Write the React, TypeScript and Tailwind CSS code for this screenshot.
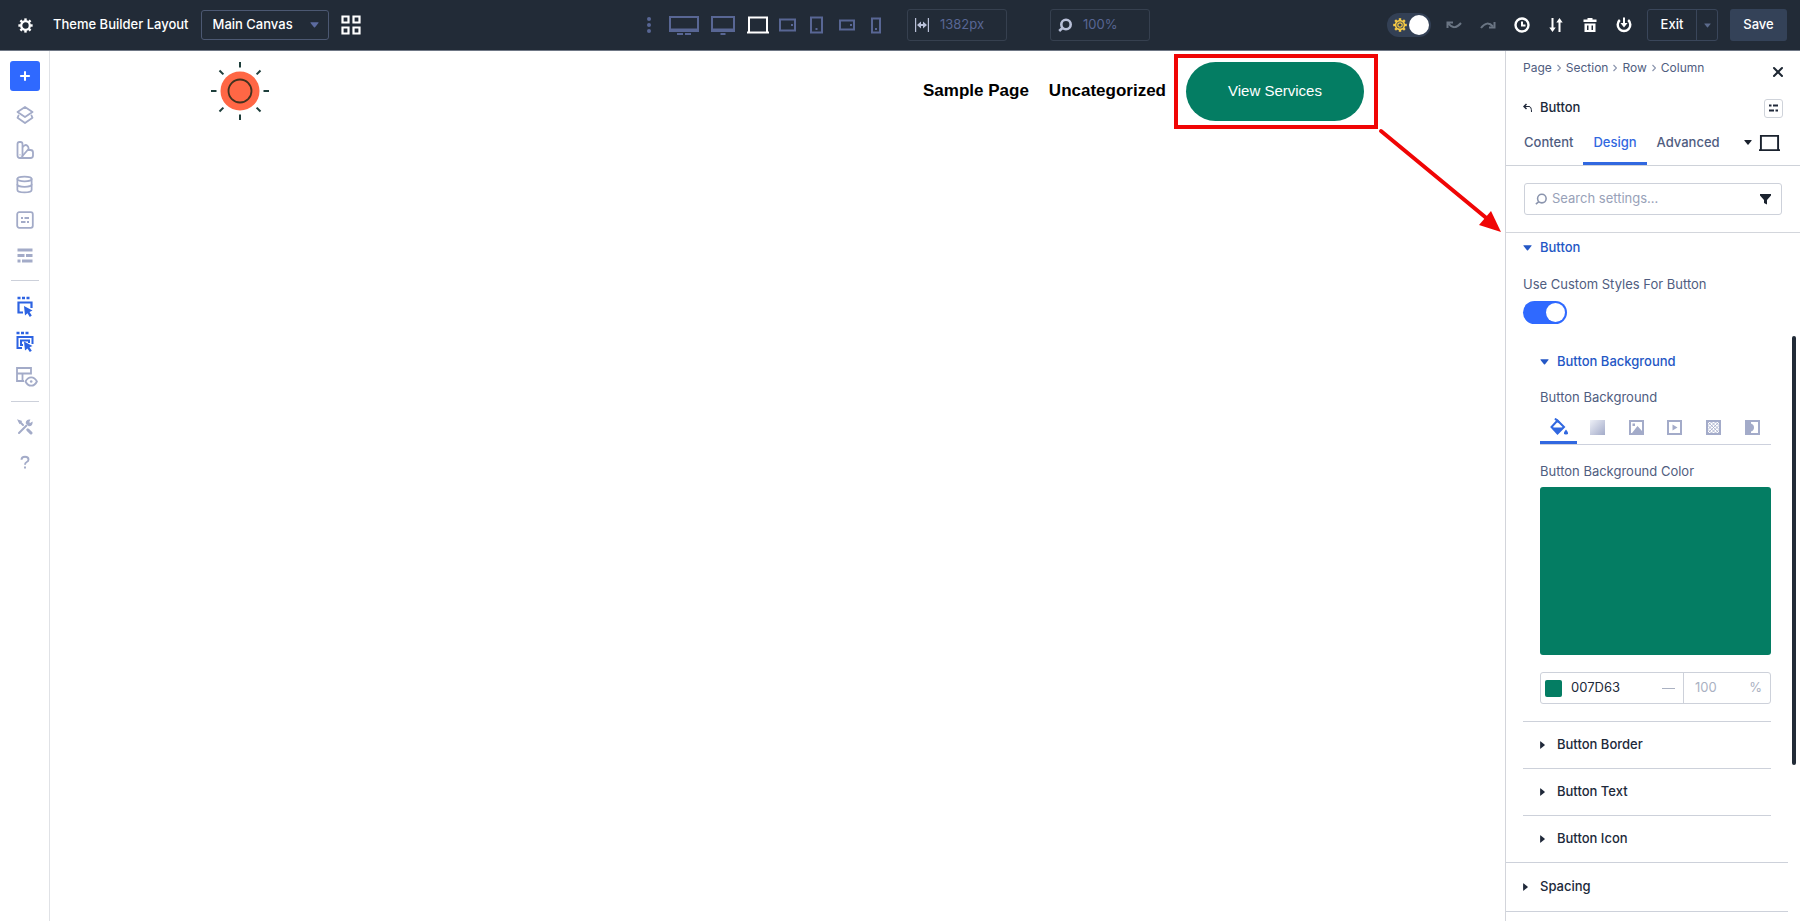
import React, { useState } from "react";
import { Database, Plus, X } from "lucide-react";

type IconProps = { className?: string };

const GearIcon = ({ className }: IconProps) => (
  <svg className={className} viewBox="0 0 16 16" fill="none" stroke="currentColor">
    <circle cx="8" cy="8" r="4.6" strokeWidth="2.4" />
    {[0, 45, 90, 135, 180, 225, 270, 315].map((a) => (
      <path key={a} d="M8 0.4V3" strokeWidth="2.6" transform={`rotate(${a} 8 8)`} />
    ))}
  </svg>
);

const SunIcon = ({ className }: IconProps) => (
  <svg className={className} viewBox="0 0 14 14" fill="none" stroke="currentColor">
    <circle cx="7" cy="7" r="4.4" strokeWidth="1.6" />
    <circle cx="7" cy="7" r="2.2" strokeWidth="1.2" />
    {[0, 45, 90, 135, 180, 225, 270, 315].map((a) => (
      <path key={a} d="M7 0.2V2.4" strokeWidth="2.4" transform={`rotate(${a} 7 7)`} />
    ))}
  </svg>
);

const CaretDown = ({ className }: IconProps) => (
  <svg className={className} viewBox="0 0 10 6" fill="currentColor">
    <path d="M1 0h8q1 0 .4.8L5.6 5.5q-.6.7-1.2 0L.6.8Q0 0 1 0z" />
  </svg>
);

const CaretRight = ({ className }: IconProps) => (
  <svg className={className} viewBox="0 0 6 10" fill="currentColor">
    <path d="M0 1v8q0 1 .8.4L5.5 5.6q.7-.6 0-1.2L.8.6Q0 0 0 1z" />
  </svg>
);

// magnifier with the handle on the lower left
const SearchIcon = ({ className }: IconProps) => (
  <svg className={className} viewBox="0 0 14 14" fill="none" stroke="currentColor" strokeWidth="2.6">
    <circle cx="8" cy="6.5" r="4.7" />
    <path d="M5 9.5L1.2 13" />
  </svg>
);

const LaptopIcon = ({ className }: IconProps) => (
  <svg className={className} viewBox="0 0 22 18" fill="none" stroke="currentColor" strokeWidth="2">
    <path d="M2 16V1.5h18V16M0 16.5h22" />
  </svg>
);

const DEVICES = [
  {
    label: "Ultra wide",
    box: "w-[30px] mr-3",
    icon: (
      <svg className="w-[30px] h-5" viewBox="0 0 30 20" fill="none" stroke="currentColor" strokeWidth="2">
        <path d="M1 2h28v14H1zM1 14.5h28M8 19h6M16 19h6" />
      </svg>
    ),
  },
  {
    label: "Wide",
    box: "w-6 mr-3",
    icon: (
      <svg className="w-6 h-5" viewBox="0 0 24 20" fill="none" stroke="currentColor" strokeWidth="2">
        <path d="M1 2h22v14H1zM1 14.5h22M9.5 19h5" />
      </svg>
    ),
  },
  { label: "Desktop", box: "w-[22px] mr-2.5 text-white", icon: <LaptopIcon className="w-[22px] h-[18px]" /> },
  {
    label: "Tablet wide",
    box: "w-[17px] mr-3.5",
    icon: (
      <svg className="w-[17px] h-3.5" viewBox="0 0 17 14" fill="none" stroke="currentColor" strokeWidth="2">
        <path d="M1 1.5h15v11H1zM12 7h2" />
      </svg>
    ),
  },
  {
    label: "Tablet",
    box: "w-[13px] mr-4",
    icon: (
      <svg className="w-[13px] h-[18px]" viewBox="0 0 13 18" fill="none" stroke="currentColor" strokeWidth="2">
        <path d="M1 1.5h11v15H1zM6.5 12v2" />
      </svg>
    ),
  },
  {
    label: "Phone wide",
    box: "w-4 mr-4",
    icon: (
      <svg className="w-4 h-3" viewBox="0 0 16 12" fill="none" stroke="currentColor" strokeWidth="2">
        <path d="M1 1.5h14v9H1zM11 6h2" />
      </svg>
    ),
  },
  {
    label: "Phone",
    box: "w-2.5 mr-[26px]",
    icon: (
      <svg className="w-2.5 h-[17px]" viewBox="0 0 10 17" fill="none" stroke="currentColor" strokeWidth="2">
        <path d="M1 1.5h8v14H1zM5 11v2" />
      </svg>
    ),
  },
];

const ACTIONS = [
  {
    label: "Undo",
    className: "text-[#6a7583]",
    icon: (
      <svg className="size-4" viewBox="0 0 16 16" fill="none" stroke="currentColor" strokeWidth="2">
        <path d="M1.5 11V5.5H7M2.5 6.5Q8 14 15 6" />
      </svg>
    ),
  },
  {
    label: "Redo",
    className: "text-[#6a7583]",
    icon: (
      <svg className="size-4" viewBox="0 0 16 16" fill="none" stroke="currentColor" strokeWidth="2">
        <path d="M1 11Q7 3 13 9.5" />
        <path d="M14.5 5v5.5H9" />
      </svg>
    ),
  },
  {
    label: "History",
    className: "text-white",
    icon: (
      <svg className="size-4" viewBox="0 0 16 16" fill="none" stroke="currentColor" strokeWidth="2">
        <circle cx="8" cy="8" r="6.5" strokeWidth="2.4" />
        <path d="M8 4.5v4h3.5" />
      </svg>
    ),
  },
  {
    label: "Portability",
    className: "text-white",
    icon: (
      <svg className="size-4" viewBox="0 0 16 16" fill="currentColor">
        <path d="M3.5 1h2v9.5h2.2L4.5 15 1.3 10.5h2.200zM10.500 15h2V5.5h2.200L11.500 1 8.300 5.500h2.200z" />
      </svg>
    ),
  },
  {
    label: "Clear",
    className: "text-white",
    icon: (
      <svg className="size-4" viewBox="0 0 16 16" fill="currentColor">
        <path d="M1.500 2.500H5.500V1h5v1.500h4V5h-13z" />
        <path fillRule="evenodd" d="M2.500 6.500h11V15h-11zM5 8.500V13h1.500V8.500zM9.500 8.500V13H11V8.500z" />
      </svg>
    ),
  },
  {
    label: "Page settings",
    className: "text-white",
    icon: (
      <svg className="size-4" viewBox="0 0 16 16" fill="none" stroke="currentColor" strokeWidth="2">
        <path d="M3.800 3a6.300 6.300 0 1 0 8.400 0" strokeWidth="2.400" />
        <path d="M8 .5v7" />
        <path d="M4.500 6h7L8 10.500z" fill="currentColor" stroke="none" />
      </svg>
    ),
  },
];

const LayersIcon = (
  <svg className="size-[18px]" viewBox="0 0 18 18" fill="none" stroke="currentColor" strokeWidth="1.8" strokeLinejoin="round" strokeLinecap="round">
    <path d="M9 1l7.500 5L9 11 1.500 6z" />
    <path d="M2.500 9.500L1.500 11.800 9 17l7.500-5.200-1-2.300" />
  </svg>
);

const SwatchIcon = (
  <svg className="size-[18px]" viewBox="0 0 18 18" fill="none" stroke="currentColor" strokeWidth="1.8" strokeLinejoin="round">
    <path d="M1.500 3q0-2 2-2h1q2 0 2 2v11.500q0 2.500-2.500 2.500T1.500 14.500z" />
    <path d="M6.500 6l2-1.600q1.500-1 2.700.3l1 1.200q1 1.400-.1 2.600L6 15.500" />
    <path d="M12 9h2.500q2.500 0 2.500 2.500v3q0 2.500-2.500 2.500H4" />
    <path d="M4 13.500v.8" strokeWidth="1.5" />
  </svg>
);

const PresetIcon = (
  <svg className="size-[18px]" viewBox="0 0 18 18" fill="none" stroke="currentColor" strokeWidth="1.8">
    <rect x="1.2" y="1.2" width="15.6" height="15.6" rx="2" />
    <path d="M5 7h2M8.500 7h4.500M5 11h4.500M11 11h2" />
  </svg>
);

const WireframeIcon = (
  <svg className="size-[18px]" viewBox="0 0 18 18" fill="none" stroke="currentColor" strokeWidth="3">
    <path d="M1.500 4h15M1.500 9.500h7M10 9.500h6.500M1.500 15h3M6 15h10.500" />
  </svg>
);

const SelectIcon = (
  <svg className="w-[18px] h-[22px]" viewBox="0 0 18 22" fill="none" stroke="currentColor" strokeWidth="2.2">
    <path d="M1.500 2h3M6 2h3M10.500 2h3" strokeWidth="2.4" />
    <path d="M7 16.500H2.500V6.500H15.500V12" />
    <path d="M8 10l8.500 4.500-3 1.500 2.300 3.600-2 1.300-2.300-3.600L9 19.500z" fill="currentColor" stroke="none" />
  </svg>
);

const MultiSelectIcon = (
  <svg className="w-[18px] h-[22px]" viewBox="0 0 18 22" fill="none" stroke="currentColor" strokeWidth="2">
    <path d="M.5 2h3M5 2h3M9.500 2h3" strokeWidth="2.4" />
    <path d="M6 17H1.500V6H16.500V13" />
    <path d="M7 14H5V9.500H13V12" />
    <path d="M8 10.500l8.500 4.500-3 1.200 2.300 3.600-2 1.300-2.300-3.600L9 19.500z" fill="currentColor" stroke="none" />
  </svg>
);

const LayoutEyeIcon = (
  <svg className="w-[22px] h-5" viewBox="0 0 22 20" fill="none" stroke="currentColor" strokeWidth="1.8">
    <path d="M8 14H1V1h14v6.500M1 6.500h14M6.500 6.500V14" />
    <path d="M9.500 14.500q2-4.200 5.700-4.200t5.700 4.200q-2 4.200-5.700 4.200t-5.700-4.200z" />
    <circle cx="15.200" cy="14.500" r="1.300" fill="currentColor" stroke="none" />
  </svg>
);

const ToolsIcon = (
  <svg className="size-4" viewBox="0 0 16 16" fill="none" stroke="currentColor" strokeWidth="2" strokeLinecap="round">
    <path d="M2 14l7.500-7.500M6 6L2.500 2.500M10.500 10.500l3 3" />
    <path d="M12.500 1q-3 0-3.200 3l2.700 2.700q3-.2 3-3.200l-2 1.200-1.500-1.500z" strokeWidth="1.2" fill="currentColor" />
    <path d="M1.200 1.200l3 1-1.500 2z" strokeWidth="1.2" />
    <path d="M11 11l3 3" strokeWidth="3" />
  </svg>
);

const FILLS = [
  {
    label: "Color",
    icon: (
      <svg className="size-[18px]" viewBox="0 0 18 18" fill="none" stroke="currentColor" strokeWidth="2">
        <path d="M5 .5l4 4" />
        <path d="M7.500 2.500L14 9l-6.500 6.500L1.500 9z" />
        <path d="M2 9.500h12L7.500 16z" fill="currentColor" stroke="none" />
        <path d="M16 11.500q2 2.500 2 3.700t-2 1.300-2-1.300 2-3.700z" fill="currentColor" stroke="none" />
      </svg>
    ),
  },
  {
    label: "Gradient",
    icon: (
      <svg className="size-[15px]" viewBox="0 0 15 15">
        <defs>
          <linearGradient id="fill-gradient" x1="0" y1="0" x2="1" y2="1">
            <stop offset="0" stopColor="#eef0f7" />
            <stop offset="1" stopColor="#a3abc9" />
          </linearGradient>
        </defs>
        <rect width="15" height="15" fill="url(#fill-gradient)" />
      </svg>
    ),
  },
  {
    label: "Image",
    icon: (
      <svg className="size-[15px]" viewBox="0 0 15 15" fill="none" stroke="currentColor" strokeWidth="2">
        <path d="M1 1h13v13H1z" />
        <path d="M3 13l5.500-7L13 11v2zM3.500 3.500H6V6H3.500z" fill="currentColor" stroke="none" />
      </svg>
    ),
  },
  {
    label: "Video",
    icon: (
      <svg className="size-[15px]" viewBox="0 0 15 15" fill="none" stroke="currentColor" strokeWidth="2">
        <path d="M1 1h13v13H1z" />
        <path d="M5.500 4.500v6l5-3z" fill="currentColor" stroke="none" />
      </svg>
    ),
  },
  {
    label: "Pattern",
    icon: (
      <svg className="size-[15px]" viewBox="0 0 15 15" fill="none" stroke="currentColor">
        <path d="M1 1h13v13H1z" strokeWidth="2" />
        <path d="M2 5.500L5.500 2M2 9.500L9.500 2M2 13L13 2M5.500 13L13 5.500M9.500 13L13 9.500M9.500 2L13 5.500M5.500 2L13 9.500M2 2l11 11M2 5.500L9.500 13M2 9.500L5.500 13" strokeWidth="0.8" />
      </svg>
    ),
  },
  {
    label: "Mask",
    icon: (
      <svg className="size-[15px]" viewBox="0 0 15 15" fill="none" stroke="currentColor" strokeWidth="2">
        <path d="M1 1h13v13H1z" />
        <path d="M1 1h5v2.500q3 1 3 4t-3 4V14H1z" fill="currentColor" stroke="none" />
      </svg>
    ),
  },
];

function TopBar() {
  return (
    <header className="grid grid-cols-[1fr_auto_1fr] items-center h-[51px] shrink-0 bg-[#222b37] border-b border-[#6f7785] pl-[18px] pr-[13px] text-white text-[13px] font-medium">
      <div className="flex items-center">
        <button aria-label="Settings">
          <GearIcon className="size-[15px]" />
        </button>
        <h1 className="ml-5 whitespace-nowrap">Theme Builder Layout</h1>
        <div className="relative ml-3">
          <select aria-label="Canvas" className="appearance-none w-32 h-[30px] pl-[11px] rounded-[3px] border border-[#4c5872] bg-transparent">
            <option>Main Canvas</option>
          </select>
          <CaretDown className="absolute right-2.5 top-3 w-[9px] h-[6px] text-[#5c6ba0] pointer-events-none" />
        </div>
        <button aria-label="Canvas grid" className="ml-3">
          <svg className="size-5" viewBox="0 0 20 20" fill="none" stroke="currentColor" strokeWidth="2.2">
            <path d="M1.500 1.500h6v6h-6zM12.500 1.500h6v6h-6zM1.500 12.500h6v6h-6zM12.500 12.500h6v6h-6z" />
          </svg>
        </button>
      </div>

      <div className="flex items-center pr-2 text-[#586694]">
        <button aria-label="More" className="mr-[18px]">
          <svg className="w-1 h-4" viewBox="0 0 4 16" fill="currentColor">
            <circle cx="2" cy="2" r="2" />
            <circle cx="2" cy="8" r="2" />
            <circle cx="2" cy="14" r="2" />
          </svg>
        </button>
        {DEVICES.map((d) => (
          <button key={d.label} aria-label={d.label} className={`shrink-0 ${d.box}`}>
            {d.icon}
          </button>
        ))}
        <label className="flex items-center w-[100px] h-8 mr-[43px] pl-[7px] rounded-[3px] border border-[#36404f]">
          <svg className="w-3.5 h-4 mr-[11px] shrink-0 text-[#b9c0d8]" viewBox="0 0 14 16" fill="none" stroke="currentColor" strokeWidth="1.2">
            <path d="M.6 1v14M13.400 1v14" />
            <path d="M4 8h6" strokeWidth="2" />
            <path d="M2 8l4-3.500v7zM12 8L8 4.500v7z" fill="currentColor" stroke="none" />
          </svg>
          <input aria-label="Canvas width" defaultValue="1382px" className="w-14 bg-transparent font-normal outline-none" />
        </label>
        <label className="flex items-center w-[100px] h-8 pl-[7px] rounded-[3px] border border-[#36404f]">
          <SearchIcon className="size-3.5 mr-[11px] shrink-0 text-[#b9c0d8]" />
          <input aria-label="Zoom" defaultValue="100%" className="w-14 bg-transparent font-normal outline-none" />
        </label>
      </div>

      <div className="flex items-center justify-end">
        <label className="relative flex mr-[15px]">
          <input
            type="checkbox"
            defaultChecked
            aria-label="Light mode"
            className="appearance-none w-11 h-6 rounded-full bg-[#334055] before:block before:size-5 before:rounded-full before:bg-white before:mt-0.5 before:ml-[22px]"
          />
          <SunIcon className="absolute left-1.5 top-[5px] size-3.5 text-[#f5c945]" />
        </label>
        <div className="flex gap-[18px] mr-[15px]">
          {ACTIONS.map((a) => (
            <button key={a.label} aria-label={a.label} className={a.className}>
              {a.icon}
            </button>
          ))}
        </div>
        <div className="flex h-8 mr-3 rounded-[3px] border border-[#3a465a]">
          <button className="w-12">Exit</button>
          <button aria-label="Exit options" className="flex items-center justify-center w-[21px] border-l border-[#3a465a]">
            <CaretDown className="w-[7px] h-[5px] text-[#5c6b8c]" />
          </button>
        </div>
        <button className="w-[57px] h-8 rounded-[3px] bg-[#344258]">Save</button>
      </div>
    </header>
  );
}

function SideButton({ label, className, children }: { label: string; className?: string; children: React.ReactNode }) {
  return (
    <button aria-label={label} className={`flex items-center justify-center w-8 h-[35px] ${className || "text-[#a3abc8]"}`}>
      {children}
    </button>
  );
}

function Sidebar() {
  return (
    <aside className="flex flex-col items-center w-[50px] shrink-0 border-r border-[#e0e2e6] pt-2.5">
      <button aria-label="Add" className="flex items-center justify-center size-[30px] mb-1.5 rounded-[3px] bg-[#2f69ff] text-white">
        <Plus className="size-3.5" strokeWidth={3.5} />
      </button>
      <SideButton label="Layers">{LayersIcon}</SideButton>
      <SideButton label="Design variables">{SwatchIcon}</SideButton>
      <SideButton label="Data">
        <Database className="size-[19px]" strokeWidth={2.2} />
      </SideButton>
      <SideButton label="Presets">{PresetIcon}</SideButton>
      <SideButton label="Wireframe">{WireframeIcon}</SideButton>
      <hr className="w-7 my-2 border-[#ccd0da]" />
      <SideButton label="Select" className="text-[#2d63e2]">{SelectIcon}</SideButton>
      <SideButton label="Multi select" className="text-[#2d63e2]">{MultiSelectIcon}</SideButton>
      <SideButton label="Layout view">
        <span className="ml-1">{LayoutEyeIcon}</span>
      </SideButton>
      <hr className="w-7 my-[7px] border-[#ccd0da]" />
      <SideButton label="Tools">{ToolsIcon}</SideButton>
      <SideButton label="Help">
        <svg className="w-3 h-3.5" viewBox="0 0 12 16" fill="none" stroke="currentColor" strokeWidth="2.2">
          <path d="M2 5.500Q2 2 6 2t4 3.200Q10 7 8 8T6 11" />
          <path d="M6 13v2.500" />
        </svg>
      </SideButton>
    </aside>
  );
}

function Canvas() {
  return (
    <main className="flex-1 min-w-0">
      <div className="flex items-center justify-between pl-40 pr-[141px] pt-2.5 font-['Liberation_Sans',Arial,sans-serif]">
        <svg className="size-[60px]" viewBox="0 0 60 60" fill="none" stroke="#1e3f3c" role="img" aria-label="Site logo">
          <circle cx="30" cy="30" r="19.5" fill="#ff6745" stroke="none" />
          <circle cx="30" cy="30" r="11.5" strokeWidth="1.8" stroke="#43321f" />
          {[0, 45, 90, 135, 180, 225, 270, 315].map((a) => (
            <path key={a} d="M30 1v5.500" strokeWidth="2" transform={`rotate(${a} 30 30)`} />
          ))}
        </svg>
        <nav className="flex items-center text-[17px] font-bold text-black">
          <a href="#" className="mr-5">Sample Page</a>
          <a href="#" className="mr-5">Uncategorized</a>
          <div className="relative">
            <a href="#" className="flex items-center justify-center w-[178px] h-[59px] rounded-[30px] bg-[#047d63] text-white text-[15px] font-normal">
              View Services
            </a>
            <div className="absolute -left-3 -right-3.5 -top-2 -bottom-2 border-4 border-[#f00505] pointer-events-none" />
            <svg className="absolute left-[192px] top-[66px] w-[126px] h-[106px] max-w-none pointer-events-none" viewBox="0 0 126 106">
              <path d="M3 3L112 93" stroke="#f00505" strokeWidth="4" strokeLinecap="round" />
              <path d="M123 104L113 83 101 97z" fill="#f00505" />
            </svg>
          </div>
        </nav>
      </div>
    </main>
  );
}

const CRUMBS = ["Page", "Section", "Row", "Column"];
const TABS = ["Content", "Design", "Advanced"];

function SettingsPanel() {
  const [tab, setTab] = useState("Design");
  const [fill, setFill] = useState("Color");

  return (
    <aside className="relative w-[295px] shrink-0 border-l border-[#d3d5db] text-[13px] text-[#4f5d80] overflow-hidden">
      <div className="border-b border-[#ced2d9]">
        <div className="flex items-start justify-between pl-[17px] pr-3.5 pt-[7px]">
          <nav className="flex items-center h-5 text-xs">
            {CRUMBS.map((c, i) => (
              <React.Fragment key={c}>
                {i > 0 && (
                  <svg className="w-1 h-2 mx-[5px]" viewBox="0 0 4 8" fill="none" stroke="#8a94ad" strokeWidth="1.2">
                    <path d="M.5 1L3.500 4 .5 7" />
                  </svg>
                )}
                <a href="#">{c}</a>
              </React.Fragment>
            ))}
          </nav>
          <button aria-label="Close" className="mt-1.5 text-[#1e2733]">
            <X className="size-4" strokeWidth={3} />
          </button>
        </div>
        <div className="flex items-center justify-between h-6 mt-4 pl-[17px] pr-[17px]">
          <button className="flex items-center gap-2 font-medium text-[#20293a]">
            <svg className="w-[9px] h-2.5" viewBox="0 0 9 10" fill="none" stroke="currentColor">
              <path d="M3.500 1L1 3.500 3.500 6" strokeWidth="1.5" />
              <path d="M1 3.500h5Q8.500 3.500 8.500 9" />
            </svg>
            Button
          </button>
          <button aria-label="Presets" className="flex items-center justify-center w-[19px] h-[19px] rounded-[3px] border border-[#cfd3da]">
            <svg className="w-[9px] h-2" viewBox="0 0 9 8" fill="none" stroke="#20293a" strokeWidth="2">
              <path d="M0 1.500h2.500M4 1.500h5M0 6.500h5M6.500 6.500H9" />
            </svg>
          </button>
        </div>
        <div className="flex items-center h-[45px] font-medium">
          <div className="flex flex-1 pl-2" role="tablist">
            {TABS.map((t) => (
              <button
                key={t}
                role="tab"
                onClick={() => setTab(t)}
                className={`h-[45px] px-2.5 pt-1 border-b-[3px] ${tab === t ? "border-[#3168e0] text-[#3168e0]" : "border-transparent"}`}
              >
                {t}
              </button>
            ))}
          </div>
          <button aria-label="Breakpoint" className="flex items-center gap-[7px] mr-5 text-[#1a222e]">
            <CaretDown className="w-2 h-[5px]" />
            <LaptopIcon className="w-[21px] h-[18px]" />
          </button>
        </div>
      </div>

      <div className="px-[18px] py-[17px] border-b border-[#d3d6dc]">
        <div className="flex items-center h-8 px-2.5 rounded-[3px] border border-[#cdd1da]">
          <svg className="size-3 mr-[5px] shrink-0 text-[#8a94ad]" viewBox="0 0 14 14" fill="none" stroke="currentColor" strokeWidth="1.8">
            <circle cx="8" cy="6.5" r="5" />
            <path d="M4.500 10L1 13" />
          </svg>
          <input aria-label="Search settings" placeholder="Search settings..." className="flex-1 min-w-0 outline-none placeholder:text-[#98a1b8]" />
          <button aria-label="Filter" className="text-[#1a222e]">
            <svg className="w-[11px] h-3" viewBox="0 0 11 12" fill="currentColor">
              <path d="M0 1h11v1.500L7 7v4.500L4 10V7L0 2.500z" />
            </svg>
          </button>
        </div>
      </div>

      <section className="pl-[17px] pr-[13px]">
        <h2>
          <button className="flex items-center gap-2 h-[30px] font-medium text-[#2457c5]">
            <CaretDown className="w-[9px] h-[6px]" />
            Button
          </button>
        </h2>
        <label htmlFor="custom-styles" className="block mt-[11px] h-5 leading-5">
          Use Custom Styles For Button
        </label>
        <input
          id="custom-styles"
          type="checkbox"
          defaultChecked
          className="block appearance-none w-11 h-[23px] mt-[7px] rounded-full bg-[#2f69ff] before:block before:size-[19px] before:rounded-full before:bg-white before:mt-0.5 before:ml-[23px]"
        />

        <div className="mt-6 mr-4 pl-[17px] pb-[17px]">
          <h3>
            <button className="flex items-center gap-2 h-7 font-medium text-[#2457c5]">
              <CaretDown className="w-[9px] h-[6px]" />
              Button Background
            </button>
          </h3>
          <p className="mt-[11px] h-5 leading-5">Button Background</p>
          <div className="flex justify-between mt-1.5 border-b border-[#cdd1dd]" role="tablist">
            {FILLS.map((f) => (
              <button
                key={f.label}
                role="tab"
                aria-label={f.label}
                onClick={() => setFill(f.label)}
                className={`flex items-center justify-center w-[37px] h-[31px] border-b-[3px] ${
                  fill === f.label ? "border-[#3168e0] text-[#3168e0]" : "border-transparent text-[#a3abc9]"
                }`}
              >
                {f.icon}
              </button>
            ))}
          </div>
          <p className="mt-4 h-5 leading-5">Button Background Color</p>
          <button aria-label="Background color" className="block w-full h-[168px] mt-1.5 rounded-[3px] bg-[#047d63]" />
          <div className="flex items-center h-8 mt-[17px] rounded-[3px] border border-[#cdd1da]">
            <span className="size-[17px] ml-1 mr-[9px] rounded-xs bg-[#047d63]" />
            <input aria-label="Hex" defaultValue="007D63" className="flex-1 min-w-0 outline-none text-[#20293a]" />
            <span className="w-[13px] mr-2 border-t border-[#aab1c2]" />
            <label className="flex items-center self-stretch w-[87px] pl-[11px] pr-2 border-l border-[#cdd1da] text-[#aab1c2]">
              <input aria-label="Opacity" defaultValue="100" className="flex-1 min-w-0 outline-none" />
              %
            </label>
          </div>
        </div>

        {["Button Border", "Button Text", "Button Icon"].map((name) => (
          <h3 key={name} className="mr-4 border-t border-[#cdd1da]">
            <button className="flex items-center gap-3 w-full h-[46px] pl-[17px] font-medium text-[#20293a]">
              <CaretRight className="w-[5px] h-2" />
              {name}
            </button>
          </h3>
        ))}
      </section>

      <h2 className="mr-3 border-y border-[#cdd1da]">
        <button className="flex items-center gap-3 w-full h-12 pl-[17px] font-medium text-[#20293a]">
          <CaretRight className="w-[5px] h-2" />
          Spacing
        </button>
      </h2>

      {/* scroll thumb */}
      <div className="absolute right-1 top-[285px] w-1 h-[429px] rounded-full bg-[#222b37]" />
    </aside>
  );
}

export default function App() {
  return (
    <div className="flex flex-col h-screen bg-white font-['Inter',sans-serif] overflow-hidden">
      <TopBar />
      <div className="flex flex-1 min-h-0">
        <Sidebar />
        <Canvas />
        <SettingsPanel />
      </div>
    </div>
  );
}
